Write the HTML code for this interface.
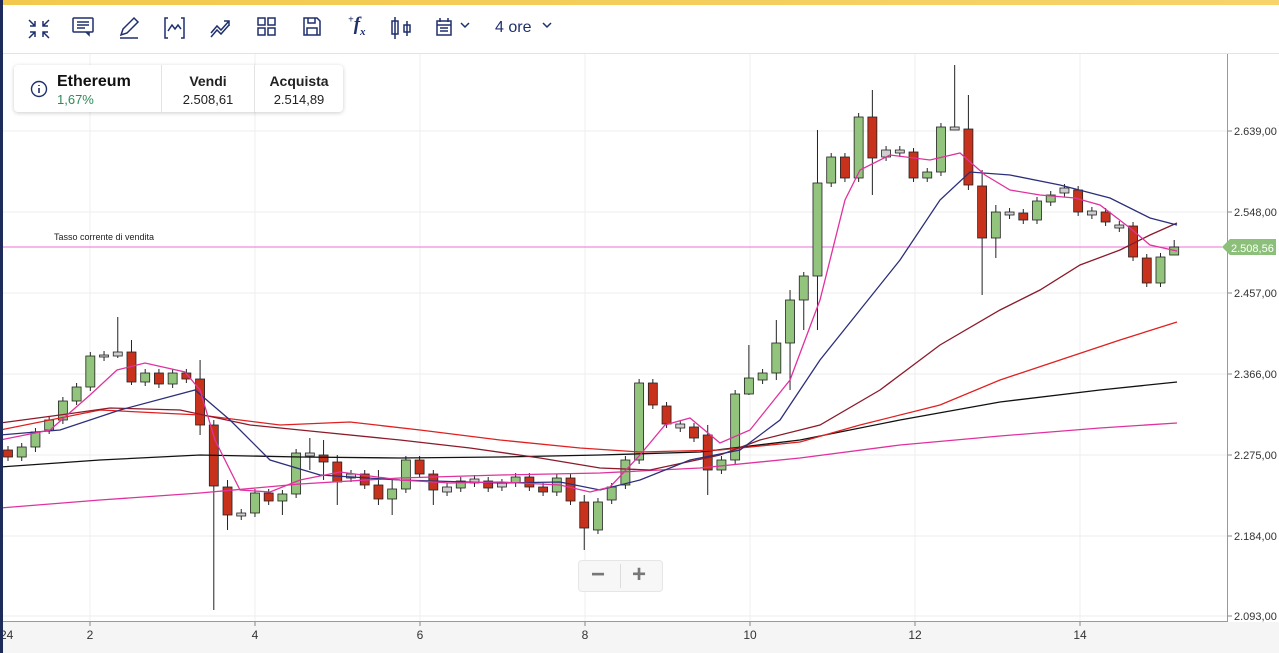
<!DOCTYPE html>
<html><head><meta charset="utf-8"><style>
body{margin:0;width:1279px;height:653px;overflow:hidden;background:#fff;font-family:"Liberation Sans",sans-serif;position:relative}
.top{position:absolute;left:0;top:0;width:1279px;height:5px;background:linear-gradient(90deg,#f2c94c,#f7d36a)}
.lb{position:absolute;left:0;top:0;width:3px;height:653px;background:#1e2a5a}
.tb{position:absolute;left:3px;top:5px;width:1276px;height:48px;border-bottom:1px solid #e3e3e3;background:#fff}
.info{position:absolute;left:14px;top:65px;width:329px;height:47px;background:#fff;border-radius:4px;box-shadow:0 1px 4px rgba(0,0,0,.2);font-size:13px;color:#222}
.info div{position:absolute;top:0;height:47px}
svg text{font-family:"Liberation Sans",sans-serif}
</style></head><body>
<svg id="c" width="1279" height="653" style="position:absolute;left:0;top:0"></svg>
<div class="top"></div><div class="lb"></div>
<div class="tb">
<svg width="600" height="48" style="position:absolute;left:0;top:-4px" fill="none" stroke="#1e2f6e" stroke-width="1.5">
<path d="M26 19l6 6M32 20v5h-5M46 19l-6 6M40 20v5h5M26 37l6-6M27 31h5v5M46 37l-6-6M45 31h-5v5"/>
<rect x="70" y="17" width="20" height="14" rx="1"/><path d="M74 21h12M74 24h12M74 27h8M86 31v3l-3-3"/>
<path d="M118 34l2-6 11-11 4 4-11 11zM117 37h18"/>
<path d="M165 17h-3v20h3M178 17h3v20h-3M165 30l4-6 3 4 3-4 3 4"/>
<path d="M208 32l6-7 4 4 8-9M221 20h5v5M208 36l6-7 4 4 8-9"/>
<rect x="255" y="17" width="7" height="7"/><rect x="265" y="17" width="7" height="7"/><rect x="255" y="27" width="7" height="7"/><rect x="265" y="27" width="7" height="7"/>
<path d="M301 17h13l3 3v14h-16zM305 17v5h7v-5M304 34v-7h10v7"/>
<path d="M392 16v22M389 20h6v13h-6zM404 20v15M401 24h6v7h-6z"/>
<rect x="434" y="20" width="14" height="14"/><path d="M434 24h14M437 17v4M445 17v4M437 27h8M437 30h8M458 22l4 4 4-4"/>
<path d="M540 22l4 4 4-4"/>
</svg>
<span style="position:absolute;left:345px;top:9px;font:italic bold 19px 'Liberation Serif',serif;color:#1e2f6e"><sup style="font-size:10px">+</sup>f<sub style="font-size:11px">x</sub></span>
<span style="position:absolute;left:492px;top:14px;font-size:16px;color:#1e2f6e">4 ore</span>
</div>
<div class="info">
<svg width="20" height="20" style="position:absolute;left:16px;top:15px"><circle cx="9" cy="9" r="7.5" fill="none" stroke="#1e2f6e" stroke-width="1.4"/><path d="M9 8v5M9 5v1" stroke="#1e2f6e" stroke-width="1.6"/></svg>
<div style="left:43px;top:8px;height:auto;font-weight:bold;font-size:16px;color:#111">Ethereum</div>
<div style="left:43px;top:27px;height:auto;font-size:13px;color:#2e8b57">1,67%</div>
<div style="left:147px;width:1px;background:#e3e3e3"></div>
<div style="left:148px;width:92px;text-align:center"><b style="display:block;margin-top:8px;font-size:14px">Vendi</b><span style="display:block;margin-top:3px">2.508,61</span></div>
<div style="left:240px;width:1px;background:#e3e3e3"></div>
<div style="left:241px;width:88px;text-align:center"><b style="display:block;margin-top:8px;font-size:14px">Acquista</b><span style="display:block;margin-top:3px">2.514,89</span></div>
</div>
<div style="position:absolute;left:578px;top:560px;width:83px;height:30px;background:#f7f7f7;border:1px solid #e6e6e6;border-radius:4px;color:#777;font-size:24px;font-weight:bold">
<span style="position:absolute;left:12px;top:0">−</span><div style="position:absolute;left:41px;top:3px;width:1px;height:24px;background:#ddd"></div><span style="position:absolute;left:53px;top:0">+</span></div>
<script>
var s='';
var ys=[131,212,293,374,455,536,616],lab=['2.639,00','2.548,00','2.457,00','2.366,00','2.275,00','2.184,00','2.093,00'];
s+='<rect x="0" y="622" width="1279" height="31" fill="#f5f5f5"/>';
[90,255,420,585,750,915,1080].forEach(function(x){s+='<line x1="'+x+'" y1="54" x2="'+x+'" y2="626" stroke="#efefef"/>';});
ys.forEach(function(y,i){s+='<line x1="0" y1="'+y+'" x2="1227" y2="'+y+'" stroke="#ececec"/><line x1="1227" y1="'+y+'" x2="1232" y2="'+y+'" stroke="#888"/><text x="1234" y="'+(y+4)+'" font-size="11" fill="#333">'+lab[i]+'</text>';});
s+='<line x1="1227.5" y1="54" x2="1227.5" y2="622" stroke="#999"/><line x1="0" y1="621.5" x2="1227" y2="621.5" stroke="#999"/>';
s+='<text x="0" y="639" font-size="12" fill="#333">24</text>';
[[90,'2'],[255,'4'],[420,'6'],[585,'8'],[750,'10'],[915,'12'],[1080,'14']].forEach(function(a){s+='<line x1="'+a[0]+'" y1="622" x2="'+a[0]+'" y2="626" stroke="#888"/><text x="'+a[0]+'" y="639" font-size="12" fill="#333" text-anchor="middle">'+a[1]+'</text>';});
s+='<line x1="0" y1="247" x2="1222" y2="247" stroke="#f08de0" stroke-width="1.2"/><text x="54" y="240" font-size="9" fill="#222">Tasso corrente di vendita</text>';
s+='<path d="M1222 247l8-8h46v16h-46z" fill="#8cc07a"/><text x="1231" y="252" font-size="11" fill="#fff">2.508,56</text>';
var C=[['r',450,457],['g',447,457],['g',432,447,428,452],['g',420,430],['g',401,420],['g',387,401],['g',356,387],['t',355,357],['t',352,356,317,358],['r',352,382,340,385],['g',373,382],['r',373,384],['g',373,384],['r',373,379],['r',379,425,360,435],['r',425,486,420,610],['r',487,515,480,530],['t',513,516],['g',493,513],['r',493,501],['g',494,501,490,515],['g',453,494],['t',453,456,438,470],['r',455,462,440,480],['r',462,482,455,505],['t',474,478],['r',474,485],['r',485,499,470,505],['g',489,499,480,515],['g',460,489],['r',460,474],['r',474,490,470,505],['t',487,492],['g',481,488],['t',479,483],['r',481,488],['t',483,487],['g',477,483],['r',477,487],['r',487,492],['g',478,492],['r',478,501],['r',502,528,495,550],['g',502,530],['g',487,500],['g',460,485],['g',383,460],['r',383,405],['r',406,424],['t',424,428],['r',427,438],['r',435,470,425,495],['g',460,470],['g',394,460],['g',378,394,345,395],['g',373,380],['g',343,373,320,380],['g',300,343,290,390],['g',276,300,272,330],['g',183,276,130,330],['g',157,183],['r',157,178],['g',117,178],['r',117,158,90,195],['t',150,157],['t',150,153],['r',152,178],['g',172,178],['g',127,172],['t',127,130,65,130],['r',129,185,95,190],['r',186,238,170,295],['g',212,238,205,258],['t',212,215],['r',213,220],['g',201,220],['g',195,202],['t',188,193],['r',190,212],['t',211,215],['r',212,222],['t',225,228],['r',226,257],['r',258,283],['g',257,283],['g',247,255,240,255]];
C.forEach(function(c,i){var x=8+i*13.72,t=c[1],b=c[2],h=c[3]||t-4,l=c[4]||b+4;var f=c[0]=='r'?'#c8321c':(c[0]=='g'?'#93c47d':'#cfcfcf');
s+='<line x1="'+x+'" y1="'+h+'" x2="'+x+'" y2="'+l+'" stroke="#222"/><rect x="'+(x-4.5)+'" y="'+t+'" width="9" height="'+Math.max(b-t,2)+'" fill="'+f+'" stroke="#222" stroke-width="0.8"/>';});
function pl(p,c){s+='<polyline points="'+p+'" fill="none" stroke="'+c+'" stroke-width="1.3"/>';}
pl('0,508 100,500 200,493 300,484 400,478 500,475 600,473 700,468 800,458 900,445 1000,436 1100,428 1177,423','#e0329e');
pl('0,467 100,460 200,455 300,457 400,458 500,457 600,455 700,452 800,440 900,420 1000,402 1100,390 1177,382','#111');
pl('0,430 100,410 200,415 280,425 350,422 420,430 500,440 580,448 640,452 720,450 800,442 860,425 940,405 1000,380 1060,360 1120,340 1177,322','#e02020');
pl('0,423 60,415 110,408 180,410 250,425 320,432 400,440 470,448 540,458 600,468 650,470 720,455 760,440 820,425 880,390 940,345 1000,310 1040,290 1080,265 1120,250 1150,235 1177,223','#8b1a2a');
pl('0,435 60,430 120,410 195,390 230,420 270,460 320,475 400,480 500,483 560,482 600,490 640,480 690,460 740,450 780,420 820,360 860,310 900,260 940,200 970,172 1010,175 1060,185 1110,198 1150,218 1177,225','#2c2f7a');
pl('0,440 50,430 90,395 117,370 145,363 185,372 200,390 215,440 240,490 270,492 300,480 340,472 400,480 450,483 500,482 560,485 590,492 610,487 640,455 665,425 690,418 720,443 750,430 790,380 820,300 845,200 860,170 890,155 930,160 960,153 985,175 1010,190 1040,195 1075,198 1100,205 1130,228 1150,245 1177,251','#e0329e');
document.getElementById('c').innerHTML=s;
</script>
</body></html>
